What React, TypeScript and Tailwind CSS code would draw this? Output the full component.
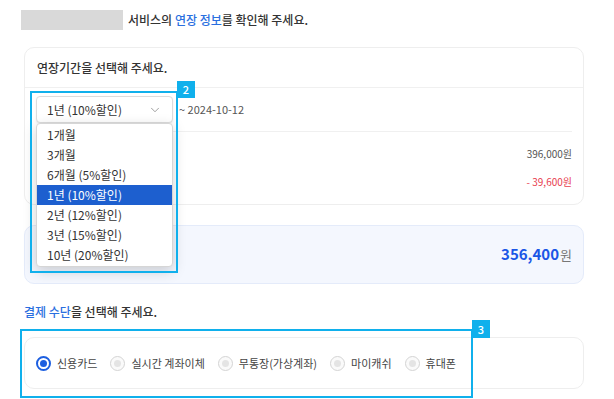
import { ChevronDown } from "lucide-react";

const periodOptions = [
  "1개월",
  "3개월",
  "6개월 (5%할인)",
  "1년 (10%할인)",
  "2년 (12%할인)",
  "3년 (15%할인)",
  "10년 (20%할인)",
];

const payMethods = ["신용카드", "실시간 계좌이체", "무통장(가상계좌)", "마이캐쉬", "휴대폰"];

function Radio({ checked }: { checked: boolean }) {
  if (checked) {
    return (
      <span className="w-[15px] h-[15px] rounded-full border-[2px] border-[#1d5fe0] flex items-center justify-center bg-white">
        <span className="w-[7px] h-[7px] rounded-full bg-[#1d5fe0]" />
      </span>
    );
  }
  return (
    <span className="w-[15px] h-[15px] rounded-full border border-[#d4d4d4] flex items-center justify-center bg-[#fafafa]">
      <span className="w-[7px] h-[7px] rounded-full bg-[#e4e4e4]" />
    </span>
  );
}

export default function App() {
  return (
    <div
      className="relative w-[614px] h-[399px] overflow-hidden bg-white pl-[24px] pr-[30px] text-[12px] text-[#333]"
      style={{ fontFamily: '"Noto Sans CJK KR", "Noto Sans", sans-serif' }}
    >
      {/* 상단 안내 */}
      <div className="mt-[10px] h-[20px] flex items-center">
        <div className="ml-[-3px] w-[102px] h-[20px] bg-[#d9d9d9]" />
        <p className="ml-[5px] font-medium">
          서비스의 <span className="text-[#2a6fe0]">연장 정보</span>를 확인해 주세요.
        </p>
      </div>

      {/* 연장기간 카드 */}
      <div className="mt-[17px] h-[158px] rounded-[10px] border border-[#eeeeee] bg-white">
        <div className="h-[40px] px-[12px] flex items-center border-b border-[#f0f0f0] font-medium">
          연장기간을 선택해 주세요.
        </div>
        <div className="mx-[11px] h-[44px] flex items-center border-b border-[#f0f0f0]">
          <div className="relative">
            <div className="w-[137px] h-[27px] rounded-[4px] border border-[#dcdcdc] bg-white flex items-center justify-between pl-[10px] pr-[10px] shadow-[0_1px_2px_rgba(0,0,0,0.08)]">
              <span>1년 (10%할인)</span>
              <ChevronDown className="w-[14px] h-[14px] text-[#777]" strokeWidth={1.2} />
            </div>
            {/* 드롭다운 목록 */}
            <ul className="absolute left-0 top-[27px] z-10 w-[137px] py-[1px] rounded-[4px] border border-[#d6d6d6] bg-white shadow-[0_4px_14px_rgba(0,0,0,0.18)]">
              {periodOptions.map((opt) => (
                <li
                  key={opt}
                  className={`h-[20px] px-[10px] flex items-center ${
                    opt === "1년 (10%할인)" ? "bg-[#1d5fcf] text-white" : "text-[#333]"
                  }`}
                >
                  {opt}
                </li>
              ))}
            </ul>
          </div>
          <span className="ml-[6px] text-[11px] text-[#555]">~ 2024-10-12</span>
        </div>
        <div className="mx-[11px] pt-[10px] flex flex-col items-end text-[10px]">
          <div className="h-[22px] flex items-center text-[#555]">396,000원</div>
          <div className="mt-[6px] h-[22px] flex items-center text-[#e8404f]">- 39,600원</div>
        </div>
      </div>

      {/* 합계 카드 */}
      <div className="mt-[20px] h-[59px] rounded-[10px] border border-[#e4ebfa] bg-[#f4f7fe] flex items-center justify-end pr-[11px]">
        <span className="text-[15px] font-bold text-[#1a56e6]">356,400</span>
        <span className="ml-[1px] text-[13px] text-[#777]">원</span>
      </div>

      {/* 결제 수단 */}
      <p className="mt-[19px] h-[18px] flex items-center font-medium">
        <span className="text-[#2a6fe0]">결제 수단</span>을 선택해 주세요.
      </p>
      <div className="mt-[16px] h-[52px] rounded-[10px] border border-[#eeeeee] bg-white flex items-center pl-[11px] gap-[13px] text-[11px]">
        {payMethods.map((m, i) => (
          <label key={m} className="flex items-center gap-[6px]">
            <Radio checked={i === 0} />
            <span className="text-[#444]">{m}</span>
          </label>
        ))}
      </div>

      {/* 표시 박스 2 */}
      <div className="absolute left-[30px] top-[91px] w-[148px] h-[182px] border-[2px] border-[#10b0ec] z-20 pointer-events-none" />
      <div className="absolute left-[177px] top-[81px] w-[18px] h-[17px] bg-[#10b0ec] text-white text-[11px] font-medium flex items-center justify-center z-20">
        2
      </div>

      {/* 표시 박스 3 */}
      <div className="absolute left-[20px] top-[329px] w-[453px] h-[69px] border-[2px] border-[#10b0ec] z-20 pointer-events-none" />
      <div className="absolute left-[472px] top-[320px] w-[18px] h-[18px] bg-[#10b0ec] text-white text-[11px] font-medium flex items-center justify-center z-20">
        3
      </div>
    </div>
  );
}
